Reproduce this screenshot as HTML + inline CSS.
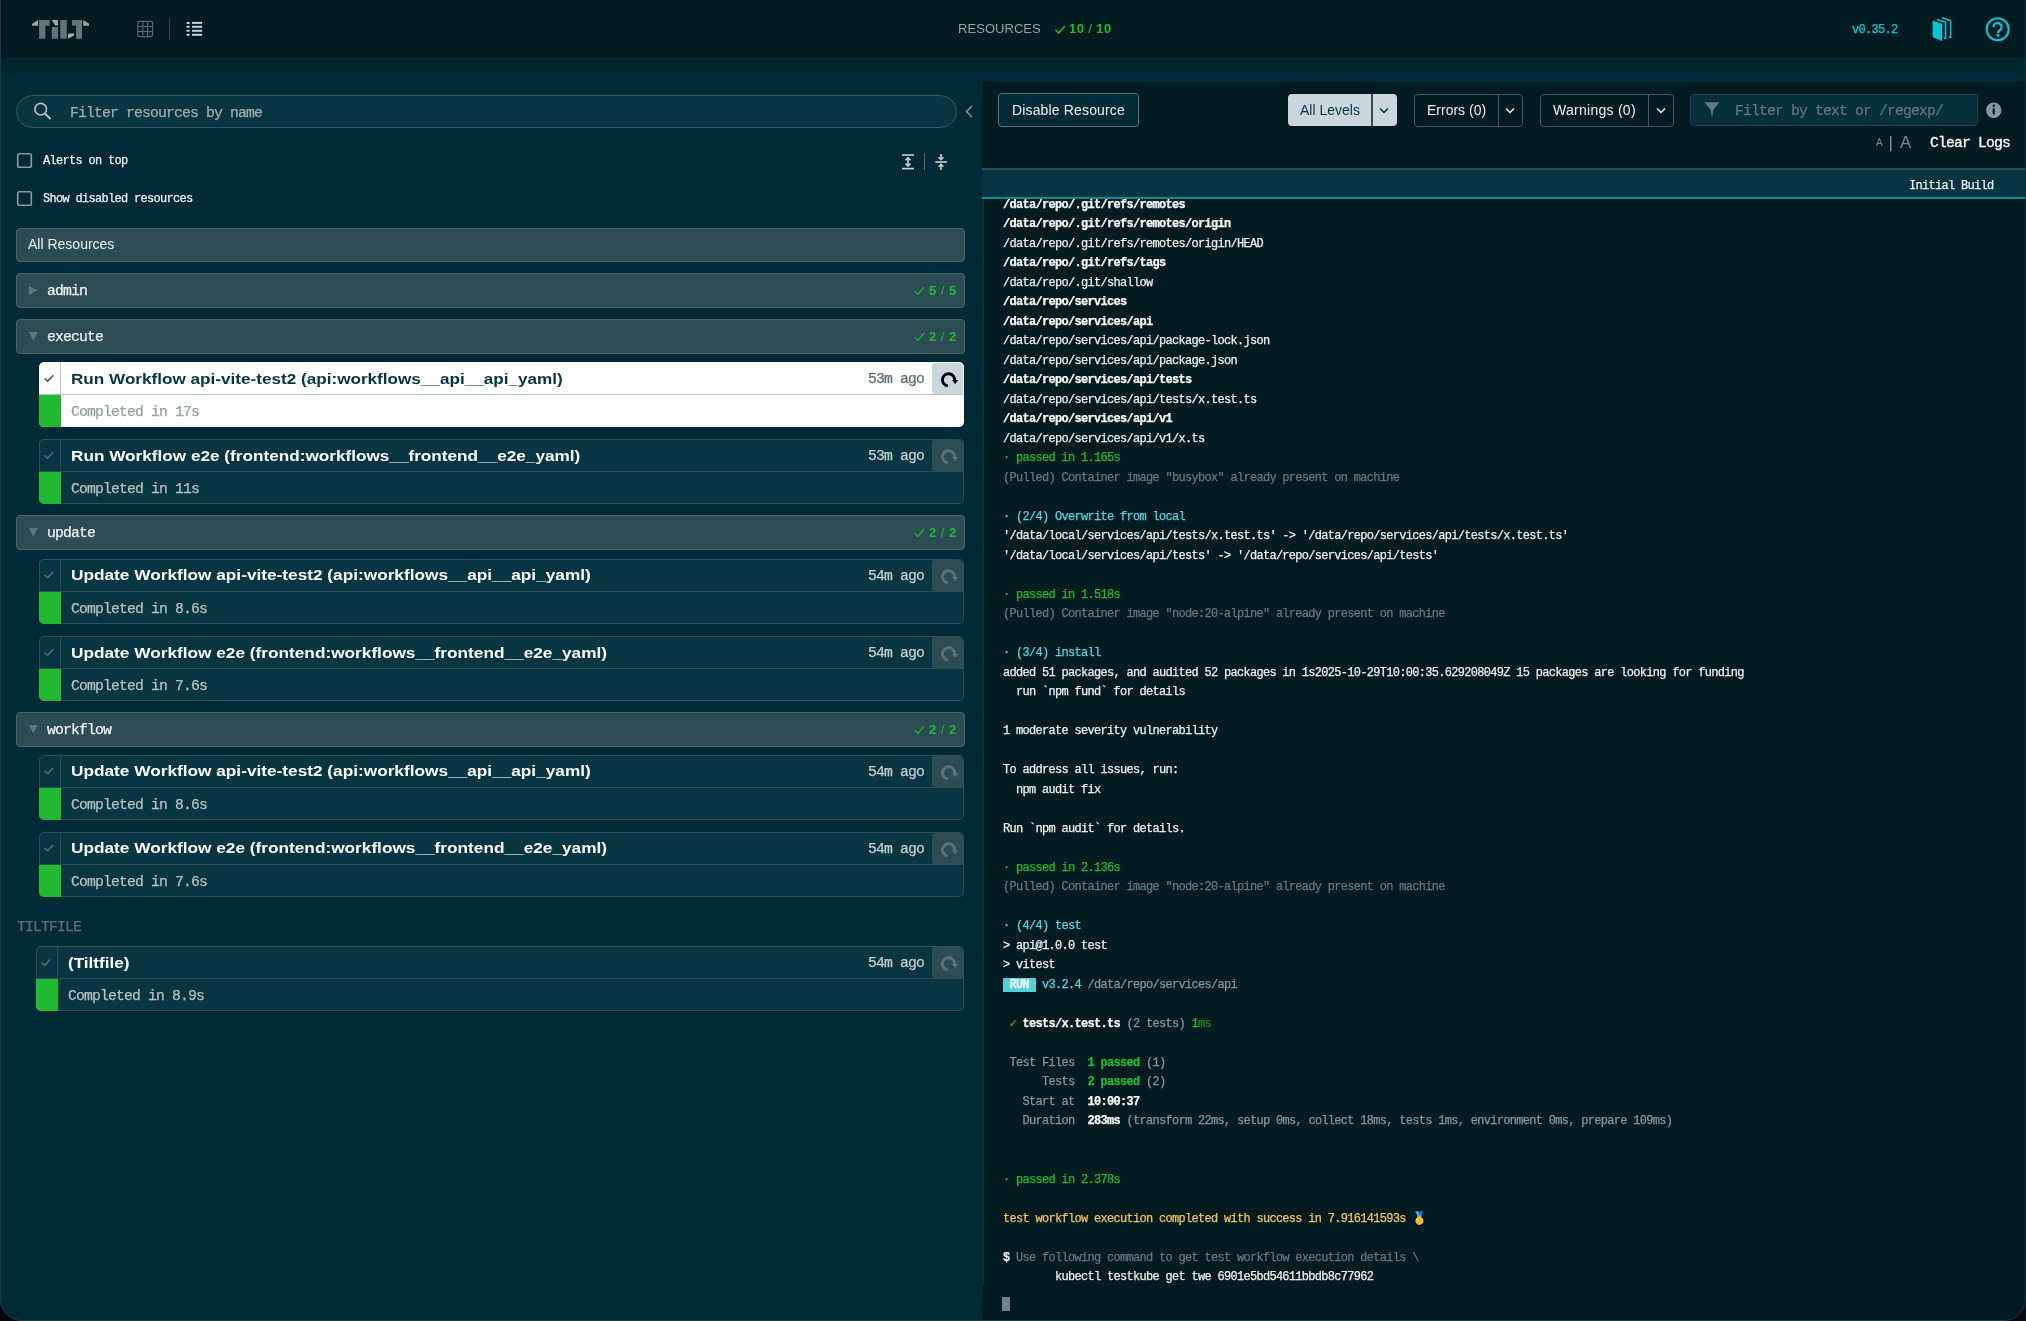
<!DOCTYPE html>
<html><head><meta charset="utf-8"><style>
*{margin:0;padding:0;box-sizing:border-box}
html,body{width:2026px;height:1321px;overflow:hidden;background:#002b36;}
body{position:relative;font-family:"Liberation Sans",sans-serif;color:#eef1f1;}
.a{position:absolute;}
.t{position:absolute;white-space:pre;line-height:0;will-change:transform;}
.sans{font-family:"Liberation Sans",sans-serif;}
</style></head>
<body>
<div class="a" style="left:0;top:0;width:2026px;height:58px;background:#021b20;"></div>
<div class="a" style="left:0;top:58px;width:2026px;height:16px;background:#00262e;"></div>
<svg class="a" style="left:0;top:0" width="2026" height="58" viewBox="0 0 2026 58">
<polygon points="32,24 38,20 38,25.7 32,25.7" fill="#9aabab"/>
<polygon points="39.1,20 49.6,20 49.6,25.7 45.4,25.7 45.4,38.7 39.1,38.7" fill="#627577"/>
<polygon points="51.8,20 58,20 58,25.5 55.2,25.5" fill="#9aabab"/>
<rect x="51.8" y="27" width="6.2" height="11.7" fill="#627577"/>
<rect x="60.2" y="20" width="6.6" height="18.7" fill="#627577"/>
<polygon points="67.9,33.7 74,33.3 74,35.5 68.1,38.7" fill="#9aabab"/>
<polygon points="72,20 82,20 82,38.7 76.1,38.7 76.1,25.7 72,25.7" fill="#627577"/>
<polygon points="83.3,20 89,23.7 89,25.7 83.3,25.7" fill="#9aabab"/>
<g stroke="#586e75" stroke-width="1.1" fill="none">
<rect x="137.8" y="21.4" width="14.8" height="15.2" rx="2"/>
<line x1="142.8" y1="21.4" x2="142.8" y2="36.6"/><line x1="147.7" y1="21.4" x2="147.7" y2="36.6"/>
<line x1="137.8" y1="26.5" x2="152.6" y2="26.5"/><line x1="137.8" y1="31.5" x2="152.6" y2="31.5"/>
</g>
<line x1="169.5" y1="18" x2="169.5" y2="40" stroke="#2f4f57" stroke-width="1"/>
<g fill="#c5d0d0">
<rect x="186.3" y="21.9" width="3.6" height="2" rx="1"/><rect x="192" y="21.9" width="10.1" height="2"/>
<rect x="186.3" y="25.8" width="3.6" height="2" rx="1"/><rect x="192" y="25.8" width="10.1" height="2"/>
<rect x="186.3" y="29.8" width="3.6" height="2" rx="1"/><rect x="192" y="29.8" width="10.1" height="2"/>
<rect x="186.3" y="33.8" width="3.6" height="2" rx="1"/><rect x="192" y="33.8" width="10.1" height="2"/>
</g>
<polyline points="1055.5,29.8 1058.6,33 1065,26" fill="none" stroke="#20ba31" stroke-width="1.6"/>
<g fill="#03c7d3">
<polygon points="1932.7,20.6 1942.2,24 1942.2,41 1932.7,37.3"/>
</g>
<g fill="none" stroke="#03c7d3" stroke-width="1.5">
<polyline points="1937,19.5 1945.6,22.3 1945.6,38.5 1944,38.2"/>
<polyline points="1942,17.8 1950.6,20.7 1950.6,37.4 1949,37"/>
</g>
<circle cx="1997.7" cy="29.2" r="11" fill="none" stroke="#03c7d3" stroke-width="2.1"/>
<path d="M1993.5,27.2 a4.05,4.05 0 1 1 6.4,3.1 c-1.3,0.9 -2,1.5 -2,3" fill="none" stroke="#03c7d3" stroke-width="2.3"/>
<rect x="1996.4" y="34" width="2.9" height="2.7" rx="0.6" fill="#03c7d3"/>
</svg>
<div class="t" style="left:958px;top:28.59px;font-size:13px;letter-spacing:0.05px;color:#93a1a1;">RESOURCES</div>
<div class="t" style="left:1069.3px;top:28.59px;font-size:13px;font-weight:bold;letter-spacing:0.4px;color:#20ba31;">10 <span style="font-weight:normal">/</span> 10</div>
<div class="t" style="left:1852px;top:30.32px;font-family:'Liberation Mono',monospace;font-size:11.96px;letter-spacing:-0.676px;-webkit-text-stroke-width:0.25px;color:#03c7d3;">v0.35.2</div>
<div class="a" style="left:16px;top:95px;width:941px;height:33px;border:1px solid #3a5860;border-radius:17px;background:#073642;"></div>
<svg class="a" style="left:0;top:74px" width="982" height="1247" viewBox="0 74 982 1247">
<circle cx="40.7" cy="109.2" r="5.8" fill="none" stroke="#b8c4c4" stroke-width="1.6"/>
<line x1="45" y1="113.5" x2="50.5" y2="119" stroke="#b8c4c4" stroke-width="2"/>
<polyline points="972,106 966.5,111.5 972,117" fill="none" stroke="#7b8f94" stroke-width="1.6"/>
<rect x="17.7" y="153.7" width="13.6" height="13.6" rx="1.8" fill="none" stroke="#7f9ea8" stroke-width="1.6"/>
<rect x="17.7" y="191.7" width="13.6" height="13.6" rx="1.8" fill="none" stroke="#7f9ea8" stroke-width="1.6"/>
<g stroke="#c9d3d3" stroke-width="1.6" fill="none">
<line x1="902" y1="155" x2="914" y2="155"/><line x1="902" y1="168.6" x2="914" y2="168.6"/>
<line x1="908" y1="157.5" x2="908" y2="166"/>
<polyline points="905.5,160.3 908,157.8 910.5,160.3"/><polyline points="905.5,163.5 908,166 910.5,163.5"/>
<line x1="935.3" y1="162" x2="947" y2="162"/>
<line x1="941" y1="154" x2="941" y2="159.5"/><polyline points="938.6,157.3 941,159.7 943.4,157.3"/>
<line x1="941" y1="164.5" x2="941" y2="170"/><polyline points="938.6,166.7 941,164.3 943.4,166.7"/>
</g>
<line x1="924.5" y1="153.5" x2="924.5" y2="170" stroke="#586e75" stroke-width="1"/>
</svg>
<div class="t" style="left:69.8px;top:113.28px;font-family:'Liberation Mono',monospace;font-size:14.72px;letter-spacing:-0.832px;-webkit-text-stroke-width:0.25px;color:#9fadad;">Filter resources by name</div>
<div class="t" style="left:43.2px;top:161.42px;font-family:'Liberation Mono',monospace;font-size:11.96px;letter-spacing:-0.676px;-webkit-text-stroke-width:0.25px;color:#eef1f1;">Alerts on top</div>
<div class="t" style="left:43.2px;top:199.42px;font-family:'Liberation Mono',monospace;font-size:11.96px;letter-spacing:-0.676px;-webkit-text-stroke-width:0.25px;color:#eef1f1;">Show disabled resources</div>
<div class="a" style="left:16px;top:228px;width:949px;height:34px;background:#2d4d55;border:1px solid #4a666d;border-radius:4px;"></div>
<div class="t" style="left:28px;top:244.45px;font-size:14px;color:#eef1f1;">All Resources</div>
<div class="a" style="left:16px;top:273px;width:949px;height:34.7px;background:#2d4d55;border:1px solid #4a666d;border-radius:4px;"></div>
<svg class="a" style="left:0;top:0;overflow:visible" width="1" height="1"><polygon points="29,286.05 37.7,290.35 29,294.65000000000003" fill="#5f787e"/><polyline points="914.8,291.15000000000003 918,294.35 924,286.85" fill="none" stroke="#20ba31" stroke-width="1.25"/></svg>
<div class="t" style="left:46.5px;top:291.38px;font-family:'Liberation Mono',monospace;font-size:14.72px;letter-spacing:-0.832px;-webkit-text-stroke-width:0.25px;color:#eef1f1;">admin</div>
<div class="t" style="left:928.7px;top:290.59px;font-size:13px;font-weight:bold;letter-spacing:0.5px;color:#20ba31;">5 <span style="font-weight:normal">/</span> 5</div>
<div class="a" style="left:16px;top:319px;width:949px;height:34.7px;background:#2d4d55;border:1px solid #4a666d;border-radius:4px;"></div>
<svg class="a" style="left:0;top:0;overflow:visible" width="1" height="1"><polygon points="29,332.05 37.7,332.05 33.35,340.65000000000003" fill="#5f787e"/><polyline points="914.8,337.15000000000003 918,340.35 924,332.85" fill="none" stroke="#20ba31" stroke-width="1.25"/></svg>
<div class="t" style="left:46.5px;top:337.38px;font-family:'Liberation Mono',monospace;font-size:14.72px;letter-spacing:-0.832px;-webkit-text-stroke-width:0.25px;color:#eef1f1;">execute</div>
<div class="t" style="left:928.7px;top:336.59px;font-size:13px;font-weight:bold;letter-spacing:0.5px;color:#20ba31;">2 <span style="font-weight:normal">/</span> 2</div>
<div class="a" style="left:38.5px;top:362px;width:925.5px;height:65px;background:#ffffff;border-radius:5px;overflow:hidden;"><div class="a" style="left:1px;top:1px;width:923.5px;height:63px;background:#ffffff;border-radius:4px;"></div><div class="a" style="left:21px;top:0;width:1px;height:32px;background:#b9c6c9;"></div><div class="a" style="left:0;top:32px;width:925.5px;height:1px;background:#b9c6c9;"></div><div class="a" style="left:0;top:33px;width:22px;height:32px;background:#20ba31;"></div><div class="a" style="left:893.5px;top:1px;width:31px;height:31px;background:#c9d6dc;border-radius:3px 5px 0 3px;"></div></div>
<svg class="a" style="left:0;top:0;overflow:visible" width="1" height="1"><polyline points="44.6,378.4 47.6,381.2 53.3,375.2" fill="none" stroke="#2b4a52" stroke-width="1.4"/></svg>
<div class="t" style="left:71.4px;top:378.83px;font-size:15.5px;font-weight:bold;transform:scaleX(1.105);transform-origin:0 0;color:#073642;">Run Workflow api-vite-test2 (api:workflows__api__api_yaml)</div>
<div class="t" style="right:1102px;top:379.08px;font-family:'Liberation Mono',monospace;font-size:14.72px;letter-spacing:-0.832px;-webkit-text-stroke-width:0.25px;color:#586e75;">53m ago</div>
<svg class="a" style="left:930px;top:362px" width="36" height="34" viewBox="0 0 36 34"><path d="M17.86,23.87 A6.1,6.1 0 1 1 24.58,18.33" fill="none" stroke="#000000" stroke-width="2.9"/><polygon points="21.9,17.9 28.2,17.9 25.2,22" fill="#000000"/></svg>
<div class="t" style="left:71.4px;top:412.08px;font-family:'Liberation Mono',monospace;font-size:14.72px;letter-spacing:-0.832px;-webkit-text-stroke-width:0.25px;color:#93a1a1;">Completed in 17s</div>
<div class="a" style="left:38.5px;top:439px;width:925.5px;height:65px;background:#2d4d55;border-radius:5px;overflow:hidden;"><div class="a" style="left:1px;top:1px;width:923.5px;height:63px;background:#073642;border-radius:4px;"></div><div class="a" style="left:21px;top:0;width:1px;height:32px;background:#2d4d55;"></div><div class="a" style="left:0;top:32px;width:925.5px;height:1px;background:#2d4d55;"></div><div class="a" style="left:0;top:33px;width:22px;height:32px;background:#20ba31;"></div><div class="a" style="left:893.5px;top:1px;width:31px;height:31px;background:#2d4d55;border-radius:3px 5px 0 3px;"></div></div>
<svg class="a" style="left:0;top:0;overflow:visible" width="1" height="1"><polyline points="44.6,455.4 47.6,458.2 53.3,452.2" fill="none" stroke="#586e75" stroke-width="1.4"/></svg>
<div class="t" style="left:71.4px;top:455.83px;font-size:15.5px;font-weight:bold;transform:scaleX(1.108);transform-origin:0 0;color:#ffffff;">Run Workflow e2e (frontend:workflows__frontend__e2e_yaml)</div>
<div class="t" style="right:1102px;top:456.08px;font-family:'Liberation Mono',monospace;font-size:14.72px;letter-spacing:-0.832px;-webkit-text-stroke-width:0.25px;color:#c5cfcf;">53m ago</div>
<svg class="a" style="left:930px;top:439px" width="36" height="34" viewBox="0 0 36 34"><path d="M17.86,23.87 A6.1,6.1 0 1 1 24.58,18.33" fill="none" stroke="#5a7177" stroke-width="2.9"/><polygon points="21.9,17.9 28.2,17.9 25.2,22" fill="#5a7177"/></svg>
<div class="t" style="left:71.4px;top:489.08px;font-family:'Liberation Mono',monospace;font-size:14.72px;letter-spacing:-0.832px;-webkit-text-stroke-width:0.25px;color:#b5c0c0;">Completed in 11s</div>
<div class="a" style="left:16px;top:515px;width:949px;height:34.7px;background:#2d4d55;border:1px solid #4a666d;border-radius:4px;"></div>
<svg class="a" style="left:0;top:0;overflow:visible" width="1" height="1"><polygon points="29,528.0500000000001 37.7,528.0500000000001 33.35,536.65" fill="#5f787e"/><polyline points="914.8,533.15 918,536.35 924,528.85" fill="none" stroke="#20ba31" stroke-width="1.25"/></svg>
<div class="t" style="left:46.5px;top:533.38px;font-family:'Liberation Mono',monospace;font-size:14.72px;letter-spacing:-0.832px;-webkit-text-stroke-width:0.25px;color:#eef1f1;">update</div>
<div class="t" style="left:928.7px;top:532.59px;font-size:13px;font-weight:bold;letter-spacing:0.5px;color:#20ba31;">2 <span style="font-weight:normal">/</span> 2</div>
<div class="a" style="left:38.5px;top:558.5px;width:925.5px;height:65px;background:#2d4d55;border-radius:5px;overflow:hidden;"><div class="a" style="left:1px;top:1px;width:923.5px;height:63px;background:#073642;border-radius:4px;"></div><div class="a" style="left:21px;top:0;width:1px;height:32px;background:#2d4d55;"></div><div class="a" style="left:0;top:32px;width:925.5px;height:1px;background:#2d4d55;"></div><div class="a" style="left:0;top:33px;width:22px;height:32px;background:#20ba31;"></div><div class="a" style="left:893.5px;top:1px;width:31px;height:31px;background:#2d4d55;border-radius:3px 5px 0 3px;"></div></div>
<svg class="a" style="left:0;top:0;overflow:visible" width="1" height="1"><polyline points="44.6,574.9 47.6,577.7 53.3,571.7" fill="none" stroke="#586e75" stroke-width="1.4"/></svg>
<div class="t" style="left:71.4px;top:575.33px;font-size:15.5px;font-weight:bold;transform:scaleX(1.112);transform-origin:0 0;color:#ffffff;">Update Workflow api-vite-test2 (api:workflows__api__api_yaml)</div>
<div class="t" style="right:1102px;top:575.58px;font-family:'Liberation Mono',monospace;font-size:14.72px;letter-spacing:-0.832px;-webkit-text-stroke-width:0.25px;color:#c5cfcf;">54m ago</div>
<svg class="a" style="left:930px;top:558.5px" width="36" height="34" viewBox="0 0 36 34"><path d="M17.86,23.87 A6.1,6.1 0 1 1 24.58,18.33" fill="none" stroke="#5a7177" stroke-width="2.9"/><polygon points="21.9,17.9 28.2,17.9 25.2,22" fill="#5a7177"/></svg>
<div class="t" style="left:71.4px;top:608.58px;font-family:'Liberation Mono',monospace;font-size:14.72px;letter-spacing:-0.832px;-webkit-text-stroke-width:0.25px;color:#b5c0c0;">Completed in 8.6s</div>
<div class="a" style="left:38.5px;top:636px;width:925.5px;height:65px;background:#2d4d55;border-radius:5px;overflow:hidden;"><div class="a" style="left:1px;top:1px;width:923.5px;height:63px;background:#073642;border-radius:4px;"></div><div class="a" style="left:21px;top:0;width:1px;height:32px;background:#2d4d55;"></div><div class="a" style="left:0;top:32px;width:925.5px;height:1px;background:#2d4d55;"></div><div class="a" style="left:0;top:33px;width:22px;height:32px;background:#20ba31;"></div><div class="a" style="left:893.5px;top:1px;width:31px;height:31px;background:#2d4d55;border-radius:3px 5px 0 3px;"></div></div>
<svg class="a" style="left:0;top:0;overflow:visible" width="1" height="1"><polyline points="44.6,652.4 47.6,655.2 53.3,649.2" fill="none" stroke="#586e75" stroke-width="1.4"/></svg>
<div class="t" style="left:71.4px;top:652.83px;font-size:15.5px;font-weight:bold;transform:scaleX(1.112);transform-origin:0 0;color:#ffffff;">Update Workflow e2e (frontend:workflows__frontend__e2e_yaml)</div>
<div class="t" style="right:1102px;top:653.08px;font-family:'Liberation Mono',monospace;font-size:14.72px;letter-spacing:-0.832px;-webkit-text-stroke-width:0.25px;color:#c5cfcf;">54m ago</div>
<svg class="a" style="left:930px;top:636px" width="36" height="34" viewBox="0 0 36 34"><path d="M17.86,23.87 A6.1,6.1 0 1 1 24.58,18.33" fill="none" stroke="#5a7177" stroke-width="2.9"/><polygon points="21.9,17.9 28.2,17.9 25.2,22" fill="#5a7177"/></svg>
<div class="t" style="left:71.4px;top:686.08px;font-family:'Liberation Mono',monospace;font-size:14.72px;letter-spacing:-0.832px;-webkit-text-stroke-width:0.25px;color:#b5c0c0;">Completed in 7.6s</div>
<div class="a" style="left:16px;top:712px;width:949px;height:34.7px;background:#2d4d55;border:1px solid #4a666d;border-radius:4px;"></div>
<svg class="a" style="left:0;top:0;overflow:visible" width="1" height="1"><polygon points="29,725.0500000000001 37.7,725.0500000000001 33.35,733.65" fill="#5f787e"/><polyline points="914.8,730.15 918,733.35 924,725.85" fill="none" stroke="#20ba31" stroke-width="1.25"/></svg>
<div class="t" style="left:46.5px;top:730.38px;font-family:'Liberation Mono',monospace;font-size:14.72px;letter-spacing:-0.832px;-webkit-text-stroke-width:0.25px;color:#eef1f1;">workflow</div>
<div class="t" style="left:928.7px;top:729.59px;font-size:13px;font-weight:bold;letter-spacing:0.5px;color:#20ba31;">2 <span style="font-weight:normal">/</span> 2</div>
<div class="a" style="left:38.5px;top:754.5px;width:925.5px;height:65px;background:#2d4d55;border-radius:5px;overflow:hidden;"><div class="a" style="left:1px;top:1px;width:923.5px;height:63px;background:#073642;border-radius:4px;"></div><div class="a" style="left:21px;top:0;width:1px;height:32px;background:#2d4d55;"></div><div class="a" style="left:0;top:32px;width:925.5px;height:1px;background:#2d4d55;"></div><div class="a" style="left:0;top:33px;width:22px;height:32px;background:#20ba31;"></div><div class="a" style="left:893.5px;top:1px;width:31px;height:31px;background:#2d4d55;border-radius:3px 5px 0 3px;"></div></div>
<svg class="a" style="left:0;top:0;overflow:visible" width="1" height="1"><polyline points="44.6,770.9 47.6,773.7 53.3,767.7" fill="none" stroke="#586e75" stroke-width="1.4"/></svg>
<div class="t" style="left:71.4px;top:771.33px;font-size:15.5px;font-weight:bold;transform:scaleX(1.112);transform-origin:0 0;color:#ffffff;">Update Workflow api-vite-test2 (api:workflows__api__api_yaml)</div>
<div class="t" style="right:1102px;top:771.58px;font-family:'Liberation Mono',monospace;font-size:14.72px;letter-spacing:-0.832px;-webkit-text-stroke-width:0.25px;color:#c5cfcf;">54m ago</div>
<svg class="a" style="left:930px;top:754.5px" width="36" height="34" viewBox="0 0 36 34"><path d="M17.86,23.87 A6.1,6.1 0 1 1 24.58,18.33" fill="none" stroke="#5a7177" stroke-width="2.9"/><polygon points="21.9,17.9 28.2,17.9 25.2,22" fill="#5a7177"/></svg>
<div class="t" style="left:71.4px;top:804.58px;font-family:'Liberation Mono',monospace;font-size:14.72px;letter-spacing:-0.832px;-webkit-text-stroke-width:0.25px;color:#b5c0c0;">Completed in 8.6s</div>
<div class="a" style="left:38.5px;top:831.5px;width:925.5px;height:65px;background:#2d4d55;border-radius:5px;overflow:hidden;"><div class="a" style="left:1px;top:1px;width:923.5px;height:63px;background:#073642;border-radius:4px;"></div><div class="a" style="left:21px;top:0;width:1px;height:32px;background:#2d4d55;"></div><div class="a" style="left:0;top:32px;width:925.5px;height:1px;background:#2d4d55;"></div><div class="a" style="left:0;top:33px;width:22px;height:32px;background:#20ba31;"></div><div class="a" style="left:893.5px;top:1px;width:31px;height:31px;background:#2d4d55;border-radius:3px 5px 0 3px;"></div></div>
<svg class="a" style="left:0;top:0;overflow:visible" width="1" height="1"><polyline points="44.6,847.9 47.6,850.7 53.3,844.7" fill="none" stroke="#586e75" stroke-width="1.4"/></svg>
<div class="t" style="left:71.4px;top:848.33px;font-size:15.5px;font-weight:bold;transform:scaleX(1.112);transform-origin:0 0;color:#ffffff;">Update Workflow e2e (frontend:workflows__frontend__e2e_yaml)</div>
<div class="t" style="right:1102px;top:848.58px;font-family:'Liberation Mono',monospace;font-size:14.72px;letter-spacing:-0.832px;-webkit-text-stroke-width:0.25px;color:#c5cfcf;">54m ago</div>
<svg class="a" style="left:930px;top:831.5px" width="36" height="34" viewBox="0 0 36 34"><path d="M17.86,23.87 A6.1,6.1 0 1 1 24.58,18.33" fill="none" stroke="#5a7177" stroke-width="2.9"/><polygon points="21.9,17.9 28.2,17.9 25.2,22" fill="#5a7177"/></svg>
<div class="t" style="left:71.4px;top:881.58px;font-family:'Liberation Mono',monospace;font-size:14.72px;letter-spacing:-0.832px;-webkit-text-stroke-width:0.25px;color:#b5c0c0;">Completed in 7.6s</div>
<div class="t" style="left:17px;top:926.98px;font-family:'Liberation Mono',monospace;font-size:14.72px;letter-spacing:-0.832px;-webkit-text-stroke-width:0.25px;color:#5d6e71;">TILTFILE</div>
<div class="a" style="left:35.5px;top:946.2px;width:928.5px;height:65px;background:#2d4d55;border-radius:5px;overflow:hidden;"><div class="a" style="left:1px;top:1px;width:926.5px;height:63px;background:#073642;border-radius:4px;"></div><div class="a" style="left:21.3px;top:0;width:1px;height:32px;background:#2d4d55;"></div><div class="a" style="left:0;top:32px;width:928.5px;height:1px;background:#2d4d55;"></div><div class="a" style="left:0;top:33px;width:22.3px;height:32px;background:#20ba31;"></div><div class="a" style="left:896.5px;top:1px;width:31px;height:31px;background:#2d4d55;border-radius:3px 5px 0 3px;"></div></div>
<svg class="a" style="left:0;top:0;overflow:visible" width="1" height="1"><polyline points="41.6,962.6 44.6,965.4000000000001 50.3,959.4000000000001" fill="none" stroke="#586e75" stroke-width="1.4"/></svg>
<div class="t" style="left:68.4px;top:963.03px;font-size:15.5px;font-weight:bold;transform:scaleX(1.105);transform-origin:0 0;color:#ffffff;">(Tiltfile)</div>
<div class="t" style="right:1102px;top:963.28px;font-family:'Liberation Mono',monospace;font-size:14.72px;letter-spacing:-0.832px;-webkit-text-stroke-width:0.25px;color:#c5cfcf;">54m ago</div>
<svg class="a" style="left:930px;top:946.2px" width="36" height="34" viewBox="0 0 36 34"><path d="M17.86,23.87 A6.1,6.1 0 1 1 24.58,18.33" fill="none" stroke="#5a7177" stroke-width="2.9"/><polygon points="21.9,17.9 28.2,17.9 25.2,22" fill="#5a7177"/></svg>
<div class="t" style="left:68.4px;top:996.28px;font-family:'Liberation Mono',monospace;font-size:14.72px;letter-spacing:-0.832px;-webkit-text-stroke-width:0.25px;color:#b5c0c0;">Completed in 8.9s</div>
<div class="a" style="left:982px;top:82px;width:1044px;height:1239px;background:#021b20;"></div>
<div class="a" style="left:998px;top:93px;width:141px;height:34px;background:#002b36;border:1px solid #586e75;border-radius:4px;"></div>
<div class="t" style="left:1012.3px;top:110.15px;font-size:14px;letter-spacing:0.15px;color:#eef1f1;">Disable Resource</div>
<div class="a" style="left:1288px;top:94px;width:108.5px;height:32px;background:#c9d6dc;border-radius:4px;"></div>
<div class="a" style="left:1370.5px;top:94px;width:2px;height:32px;background:#2d4d55;"></div>
<div class="t" style="left:1300px;top:110.15px;font-size:14px;color:#073642;">All Levels</div>
<div class="a" style="left:1413.5px;top:93.5px;width:109.5px;height:33.5px;border:1px solid #3b5a62;border-radius:4px;"></div>
<div class="a" style="left:1497.5px;top:93.5px;width:1px;height:33.5px;background:#3b5a62;"></div>
<div class="t" style="left:1426.8px;top:110.15px;font-size:14px;letter-spacing:0px;color:#eef1f1;">Errors (0)</div>
<div class="a" style="left:1539.5px;top:93.5px;width:134.5px;height:33.5px;border:1px solid #3b5a62;border-radius:4px;"></div>
<div class="a" style="left:1648px;top:93.5px;width:1px;height:33.5px;background:#3b5a62;"></div>
<div class="t" style="left:1553.3px;top:110.15px;font-size:14px;letter-spacing:0.27px;color:#eef1f1;">Warnings (0)</div>
<div class="a" style="left:1690px;top:94px;width:288px;height:31.5px;background:#052f3a;border:1px solid #1c4550;border-radius:4px;"></div>
<svg class="a" style="left:982px;top:82px" width="1044" height="1239" viewBox="982 82 1044 1239">
<polyline points="1380,108.5 1384,112.5 1388,108.5" fill="none" stroke="#073642" stroke-width="1.5"/>
<polyline points="1506,108.5 1510,112.5 1514,108.5" fill="none" stroke="#eef1f1" stroke-width="1.5"/>
<polyline points="1657,108.5 1661,112.5 1665,108.5" fill="none" stroke="#eef1f1" stroke-width="1.5"/>
<polygon points="1704,102.3 1719.6,102.3 1713.5,109.5 1712,117.9 1710.5,109.5" fill="#627a80"/>
<circle cx="1993.7" cy="110.3" r="7.7" fill="#7f9ba5"/>
<rect x="1992.6" y="108.3" width="2.2" height="6.2" fill="#021b20"/><circle cx="1993.7" cy="105.8" r="1.2" fill="#021b20"/>
<line x1="1890.7" y1="136" x2="1890.7" y2="151.4" stroke="#6f8c95" stroke-width="1.6"/>
</svg>
<div class="t" style="left:1734.7px;top:110.68px;font-family:'Liberation Mono',monospace;font-size:14.72px;letter-spacing:-0.832px;-webkit-text-stroke-width:0.25px;color:#5f777d;">Filter by text or /regexp/</div>
<div class="t" style="left:1875.6px;top:142.53px;font-size:10px;color:#6f8c95;">A</div>
<div class="t" style="left:1899.5px;top:142.61px;font-size:17px;color:#6f8c95;">A</div>
<div class="t" style="left:1930px;top:142.88px;font-family:'Liberation Mono',monospace;font-size:14.72px;letter-spacing:-0.832px;-webkit-text-stroke-width:0.25px;color:#ffffff;-webkit-text-stroke:0.3px #ffffff;">Clear Logs</div>
<div class="a" style="left:982px;top:168px;width:1044px;height:2px;background:#2d4d55;"></div>
<div class="a" style="left:982px;top:170px;width:1044px;height:27px;background:#073642;"></div>
<div class="a" style="left:982px;top:197px;width:1044px;height:2px;background:#0c8c96;"></div>
<div class="t" style="left:1909.3px;top:185.82px;font-family:'Liberation Mono',monospace;font-size:11.96px;letter-spacing:-0.676px;-webkit-text-stroke-width:0.25px;color:#eef1f1;">Initial Build</div>
<div class="a" style="left:982px;top:199px;width:2px;height:1086px;background:#073642;"></div>
<div class="a" style="left:1002px;top:1297px;width:8px;height:14px;background:#72828a;"></div>
<div class="t" style="left:1003px;top:204.62px;font-family:'Liberation Mono',monospace;font-size:11.96px;letter-spacing:-0.676px;-webkit-text-stroke-width:0.25px;"><span style="color:#ffffff;font-weight:bold;">/data/repo/.git/refs/remotes</span></div><div class="t" style="left:1003px;top:224.12px;font-family:'Liberation Mono',monospace;font-size:11.96px;letter-spacing:-0.676px;-webkit-text-stroke-width:0.25px;"><span style="color:#ffffff;font-weight:bold;">/data/repo/.git/refs/remotes/origin</span></div><div class="t" style="left:1003px;top:243.62px;font-family:'Liberation Mono',monospace;font-size:11.96px;letter-spacing:-0.676px;-webkit-text-stroke-width:0.25px;"><span style="color:#eef1f1;">/data/repo/.git/refs/remotes/origin/HEAD</span></div><div class="t" style="left:1003px;top:263.12px;font-family:'Liberation Mono',monospace;font-size:11.96px;letter-spacing:-0.676px;-webkit-text-stroke-width:0.25px;"><span style="color:#ffffff;font-weight:bold;">/data/repo/.git/refs/tags</span></div><div class="t" style="left:1003px;top:282.62px;font-family:'Liberation Mono',monospace;font-size:11.96px;letter-spacing:-0.676px;-webkit-text-stroke-width:0.25px;"><span style="color:#eef1f1;">/data/repo/.git/shallow</span></div><div class="t" style="left:1003px;top:302.12px;font-family:'Liberation Mono',monospace;font-size:11.96px;letter-spacing:-0.676px;-webkit-text-stroke-width:0.25px;"><span style="color:#ffffff;font-weight:bold;">/data/repo/services</span></div><div class="t" style="left:1003px;top:321.62px;font-family:'Liberation Mono',monospace;font-size:11.96px;letter-spacing:-0.676px;-webkit-text-stroke-width:0.25px;"><span style="color:#ffffff;font-weight:bold;">/data/repo/services/api</span></div><div class="t" style="left:1003px;top:341.12px;font-family:'Liberation Mono',monospace;font-size:11.96px;letter-spacing:-0.676px;-webkit-text-stroke-width:0.25px;"><span style="color:#eef1f1;">/data/repo/services/api/package-lock.json</span></div><div class="t" style="left:1003px;top:360.62px;font-family:'Liberation Mono',monospace;font-size:11.96px;letter-spacing:-0.676px;-webkit-text-stroke-width:0.25px;"><span style="color:#eef1f1;">/data/repo/services/api/package.json</span></div><div class="t" style="left:1003px;top:380.12px;font-family:'Liberation Mono',monospace;font-size:11.96px;letter-spacing:-0.676px;-webkit-text-stroke-width:0.25px;"><span style="color:#ffffff;font-weight:bold;">/data/repo/services/api/tests</span></div><div class="t" style="left:1003px;top:399.62px;font-family:'Liberation Mono',monospace;font-size:11.96px;letter-spacing:-0.676px;-webkit-text-stroke-width:0.25px;"><span style="color:#eef1f1;">/data/repo/services/api/tests/x.test.ts</span></div><div class="t" style="left:1003px;top:419.12px;font-family:'Liberation Mono',monospace;font-size:11.96px;letter-spacing:-0.676px;-webkit-text-stroke-width:0.25px;"><span style="color:#ffffff;font-weight:bold;">/data/repo/services/api/v1</span></div><div class="t" style="left:1003px;top:438.62px;font-family:'Liberation Mono',monospace;font-size:11.96px;letter-spacing:-0.676px;-webkit-text-stroke-width:0.25px;"><span style="color:#eef1f1;">/data/repo/services/api/v1/x.ts</span></div><div class="t" style="left:1003px;top:458.12px;font-family:'Liberation Mono',monospace;font-size:11.96px;letter-spacing:-0.676px;-webkit-text-stroke-width:0.25px;"><span style="color:#20ba31;">· passed in 1.165s</span></div><div class="t" style="left:1003px;top:477.62px;font-family:'Liberation Mono',monospace;font-size:11.96px;letter-spacing:-0.676px;-webkit-text-stroke-width:0.25px;"><span style="color:#64787c;">(Pulled) Container image &quot;busybox&quot; already present on machine</span></div><div class="t" style="left:1003px;top:516.62px;font-family:'Liberation Mono',monospace;font-size:11.96px;letter-spacing:-0.676px;-webkit-text-stroke-width:0.25px;"><span style="color:#4fd8e2;">· (2/4) Overwrite from local</span></div><div class="t" style="left:1003px;top:536.12px;font-family:'Liberation Mono',monospace;font-size:11.96px;letter-spacing:-0.676px;-webkit-text-stroke-width:0.25px;"><span style="color:#eef1f1;">&#x27;/data/local/services/api/tests/x.test.ts&#x27; -&gt; &#x27;/data/repo/services/api/tests/x.test.ts&#x27;</span></div><div class="t" style="left:1003px;top:555.62px;font-family:'Liberation Mono',monospace;font-size:11.96px;letter-spacing:-0.676px;-webkit-text-stroke-width:0.25px;"><span style="color:#eef1f1;">&#x27;/data/local/services/api/tests&#x27; -&gt; &#x27;/data/repo/services/api/tests&#x27;</span></div><div class="t" style="left:1003px;top:594.62px;font-family:'Liberation Mono',monospace;font-size:11.96px;letter-spacing:-0.676px;-webkit-text-stroke-width:0.25px;"><span style="color:#20ba31;">· passed in 1.518s</span></div><div class="t" style="left:1003px;top:614.12px;font-family:'Liberation Mono',monospace;font-size:11.96px;letter-spacing:-0.676px;-webkit-text-stroke-width:0.25px;"><span style="color:#64787c;">(Pulled) Container image &quot;node:20-alpine&quot; already present on machine</span></div><div class="t" style="left:1003px;top:653.12px;font-family:'Liberation Mono',monospace;font-size:11.96px;letter-spacing:-0.676px;-webkit-text-stroke-width:0.25px;"><span style="color:#4fd8e2;">· (3/4) install</span></div><div class="t" style="left:1003px;top:672.62px;font-family:'Liberation Mono',monospace;font-size:11.96px;letter-spacing:-0.676px;-webkit-text-stroke-width:0.25px;"><span style="color:#eef1f1;">added 51 packages, and audited 52 packages in 1s2025-10-29T10:00:35.629208049Z 15 packages are looking for funding</span></div><div class="t" style="left:1003px;top:692.12px;font-family:'Liberation Mono',monospace;font-size:11.96px;letter-spacing:-0.676px;-webkit-text-stroke-width:0.25px;"><span style="color:#eef1f1;">  run `npm fund` for details</span></div><div class="t" style="left:1003px;top:731.12px;font-family:'Liberation Mono',monospace;font-size:11.96px;letter-spacing:-0.676px;-webkit-text-stroke-width:0.25px;"><span style="color:#eef1f1;">1 moderate severity vulnerability</span></div><div class="t" style="left:1003px;top:770.12px;font-family:'Liberation Mono',monospace;font-size:11.96px;letter-spacing:-0.676px;-webkit-text-stroke-width:0.25px;"><span style="color:#eef1f1;">To address all issues, run:</span></div><div class="t" style="left:1003px;top:789.62px;font-family:'Liberation Mono',monospace;font-size:11.96px;letter-spacing:-0.676px;-webkit-text-stroke-width:0.25px;"><span style="color:#eef1f1;">  npm audit fix</span></div><div class="t" style="left:1003px;top:828.62px;font-family:'Liberation Mono',monospace;font-size:11.96px;letter-spacing:-0.676px;-webkit-text-stroke-width:0.25px;"><span style="color:#eef1f1;">Run `npm audit` for details.</span></div><div class="t" style="left:1003px;top:867.62px;font-family:'Liberation Mono',monospace;font-size:11.96px;letter-spacing:-0.676px;-webkit-text-stroke-width:0.25px;"><span style="color:#20ba31;">· passed in 2.136s</span></div><div class="t" style="left:1003px;top:887.12px;font-family:'Liberation Mono',monospace;font-size:11.96px;letter-spacing:-0.676px;-webkit-text-stroke-width:0.25px;"><span style="color:#64787c;">(Pulled) Container image &quot;node:20-alpine&quot; already present on machine</span></div><div class="t" style="left:1003px;top:926.12px;font-family:'Liberation Mono',monospace;font-size:11.96px;letter-spacing:-0.676px;-webkit-text-stroke-width:0.25px;"><span style="color:#4fd8e2;">· (4/4) test</span></div><div class="t" style="left:1003px;top:945.62px;font-family:'Liberation Mono',monospace;font-size:11.96px;letter-spacing:-0.676px;-webkit-text-stroke-width:0.25px;"><span style="color:#eef1f1;">&gt; api@1.0.0 test</span></div><div class="t" style="left:1003px;top:965.12px;font-family:'Liberation Mono',monospace;font-size:11.96px;letter-spacing:-0.676px;-webkit-text-stroke-width:0.25px;"><span style="color:#eef1f1;">&gt; vitest</span></div><div class="t" style="left:1003px;top:984.62px;font-family:'Liberation Mono',monospace;font-size:11.96px;letter-spacing:-0.676px;-webkit-text-stroke-width:0.25px;"><span style="color:#eafcfd;font-weight:bold;background:#4fd0da;"> RUN </span><span style="color:#4fd8e2;"> v3.2.4 </span><span style="color:#86969a;">/data/repo/services/api</span></div><div class="t" style="left:1003px;top:1023.62px;font-family:'Liberation Mono',monospace;font-size:11.96px;letter-spacing:-0.676px;-webkit-text-stroke-width:0.25px;"><span style="color:#20ba31;"> ✓ </span><span style="color:#ffffff;font-weight:bold;">tests/x.test.ts</span><span style="color:#86969a;"> (2 tests) </span><span style="color:#20ba31;">1</span><span style="color:#1d8a2c;">ms</span></div><div class="t" style="left:1003px;top:1062.62px;font-family:'Liberation Mono',monospace;font-size:11.96px;letter-spacing:-0.676px;-webkit-text-stroke-width:0.25px;"><span style="color:#86969a;"> Test Files  </span><span style="color:#20ba31;font-weight:bold;">1 passed</span><span style="color:#86969a;"> (1)</span></div><div class="t" style="left:1003px;top:1082.12px;font-family:'Liberation Mono',monospace;font-size:11.96px;letter-spacing:-0.676px;-webkit-text-stroke-width:0.25px;"><span style="color:#86969a;">      Tests  </span><span style="color:#20ba31;font-weight:bold;">2 passed</span><span style="color:#86969a;"> (2)</span></div><div class="t" style="left:1003px;top:1101.62px;font-family:'Liberation Mono',monospace;font-size:11.96px;letter-spacing:-0.676px;-webkit-text-stroke-width:0.25px;"><span style="color:#86969a;">   Start at  </span><span style="color:#ffffff;font-weight:bold;">10:00:37</span></div><div class="t" style="left:1003px;top:1121.12px;font-family:'Liberation Mono',monospace;font-size:11.96px;letter-spacing:-0.676px;-webkit-text-stroke-width:0.25px;"><span style="color:#86969a;">   Duration  </span><span style="color:#ffffff;font-weight:bold;">283ms</span><span style="color:#86969a;"> (transform 22ms, setup 0ms, collect 18ms, tests 1ms, environment 0ms, prepare 109ms)</span></div><div class="t" style="left:1003px;top:1179.62px;font-family:'Liberation Mono',monospace;font-size:11.96px;letter-spacing:-0.676px;-webkit-text-stroke-width:0.25px;"><span style="color:#20ba31;">· passed in 2.378s</span></div><div class="t" style="left:1003px;top:1218.62px;font-family:'Liberation Mono',monospace;font-size:11.96px;letter-spacing:-0.676px;-webkit-text-stroke-width:0.25px;"><span style="color:#f5c451;">test workflow execution completed with success in 7.916141593s </span><span style="color:#f5c451;">🥇</span></div><div class="t" style="left:1003px;top:1257.62px;font-family:'Liberation Mono',monospace;font-size:11.96px;letter-spacing:-0.676px;-webkit-text-stroke-width:0.25px;"><span style="color:#eef1f1;font-weight:bold;">$ </span><span style="color:#64787c;">Use following command to get test workflow execution details \</span></div><div class="t" style="left:1003px;top:1277.12px;font-family:'Liberation Mono',monospace;font-size:11.96px;letter-spacing:-0.676px;-webkit-text-stroke-width:0.25px;"><span style="color:#eef1f1;">        kubectl testkube get twe 6901e5bd54611bbdb8c77962</span></div>
<div class="a" style="left:0;top:0;width:1px;height:1321px;background:#1b3a41;"></div>
<div class="a" style="left:2025px;top:0;width:1px;height:1321px;background:#1b3036;"></div>
<div class="a" style="left:0;top:1320px;width:2026px;height:1px;background:#1b3a41;"></div>
<svg class="a" style="left:0;top:1291px" width="2026" height="30" viewBox="0 1291 2026 30"><path d="M0,1299 A22,22 0 0 0 22,1321 L0,1321 Z" fill="#03060c"/><path d="M2026,1299 A22,22 0 0 1 2004,1321 L2026,1321 Z" fill="#070b12"/><path d="M0.5,1299 A21.5,21.5 0 0 0 22,1320.5" fill="none" stroke="#1b3a41" stroke-width="1"/><path d="M2025.5,1299 A21.5,21.5 0 0 1 2004,1320.5" fill="none" stroke="#1b3036" stroke-width="1"/></svg>
</body></html>
